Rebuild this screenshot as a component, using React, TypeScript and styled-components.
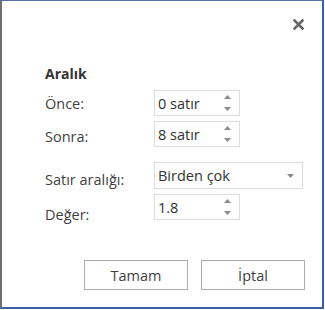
import React, { FC } from 'react'
import styled, { createGlobalStyle } from 'styled-components'

const GlobalStyle = createGlobalStyle`
  html, body {
    margin: 0;
    padding: 0;
    background: #ffffff;
  }
  body {
    font-family: 'Open Sans', 'Liberation Sans', sans-serif;
    font-size: 14.5px;
    color: #3f3f3f;
  }
`

const Window = styled.div`
  box-sizing: border-box;
  width: 324px;
  height: 309px;
  background: #ffffff;
  border-top: 1px solid #56709f;
  border-left: 2px solid #6f6f6f;
  border-right: 2px solid #3b5ea6;
  border-bottom: 2px solid #3b5ea6;
  display: flex;
  flex-direction: column;
`

const TitleBar = styled.div`
  display: flex;
  justify-content: flex-end;
  padding: 18px 18px 0 0;
  height: 11px;
`

const CloseButton = styled.button`
  border: none;
  background: transparent;
  padding: 0;
  width: 11px;
  height: 11px;
  display: flex;
  cursor: pointer;
`

const Body = styled.div`
  padding-left: 43px;
  padding-top: 34px;
  display: flex;
  flex-direction: column;
`

const Heading = styled.div`
  font-weight: 700;
  font-size: 14px;
  line-height: 19px;
  color: #333333;
  margin-bottom: 7px;
`

const Row = styled.div<{ $gap: number }>`
  display: grid;
  grid-template-columns: 109px auto;
  align-items: center;
  margin-bottom: ${(p) => p.$gap}px;
`

// labels in this dialog sit a bit lower than their fields, more so further down
const Label = styled.label<{ $drop: number }>`
  line-height: 19px;
  color: #3f3f3f;
  margin-top: ${(p) => p.$drop}px;
  margin-bottom: ${(p) => -p.$drop}px;
`

const Field = styled.div<{ $w: number; $h: number }>`
  box-sizing: border-box;
  width: ${(p) => p.$w}px;
  height: ${(p) => p.$h}px;
  border: 1px solid #dcdcdc;
  display: flex;
  align-items: center;
  padding-left: 3px;
  padding-right: 8px;
  color: #333333;
  line-height: 19px;
`

const FieldText = styled.span`
  flex: 1;
`

const Spinner = styled.div`
  display: flex;
  flex-direction: column;
  justify-content: space-between;
  height: 16px;
`

const Footer = styled.div`
  display: flex;
  justify-content: flex-end;
  gap: 13px;
  padding-right: 17px;
  margin-top: 40px;
`

const Button = styled.button`
  box-sizing: border-box;
  width: 104px;
  height: 30px;
  background: #ffffff;
  border: 1px solid #ababab;
  font-family: 'Open Sans', 'Liberation Sans', sans-serif;
  font-size: 14.5px;
  color: #3f3f3f;
  padding: 0;
  cursor: pointer;
`

const Triangle: FC<{ up?: boolean }> = ({ up }) => (
  <svg width="7" height="4" viewBox="0 0 7 4">
    <path d={up ? 'M0 4 L3.5 0 L7 4 Z' : 'M0 0 L3.5 4 L7 0 Z'} fill="#8c8c8c" />
  </svg>
)

const SpinBox: FC<{ value: string }> = ({ value }) => (
  <Field $w={86} $h={26}>
    <FieldText>{value}</FieldText>
    <Spinner>
      <Triangle up />
      <Triangle />
    </Spinner>
  </Field>
)

const App: FC = () => {
  return (
    <>
      <GlobalStyle />
      <Window>
        <TitleBar>
          <CloseButton aria-label="Kapat">
            <svg width="11" height="11" viewBox="0 0 11 11">
              <path d="M1.5 1.5 L9.5 9.5 M9.5 1.5 L1.5 9.5" stroke="#666666" strokeWidth="2.6" strokeLinecap="square" />
            </svg>
          </CloseButton>
        </TitleBar>
        <Body>
          <Heading>Aralık</Heading>
          <Row $gap={5}>
            <Label $drop={0}>Önce:</Label>
            <SpinBox value="0 satır" />
          </Row>
          <Row $gap={15}>
            <Label $drop={2}>Sonra:</Label>
            <SpinBox value="8 satır" />
          </Row>
          <Row $gap={5}>
            <Label $drop={4}>Satır aralığı:</Label>
            <Field $w={149} $h={27}>
              <FieldText>Birden çok</FieldText>
              <Triangle />
            </Field>
          </Row>
          <Row $gap={0}>
            <Label $drop={7}>Değer:</Label>
            <SpinBox value="1.8" />
          </Row>
        </Body>
        <Footer>
          <Button>Tamam</Button>
          <Button>İptal</Button>
        </Footer>
      </Window>
    </>
  )
}

export default App
